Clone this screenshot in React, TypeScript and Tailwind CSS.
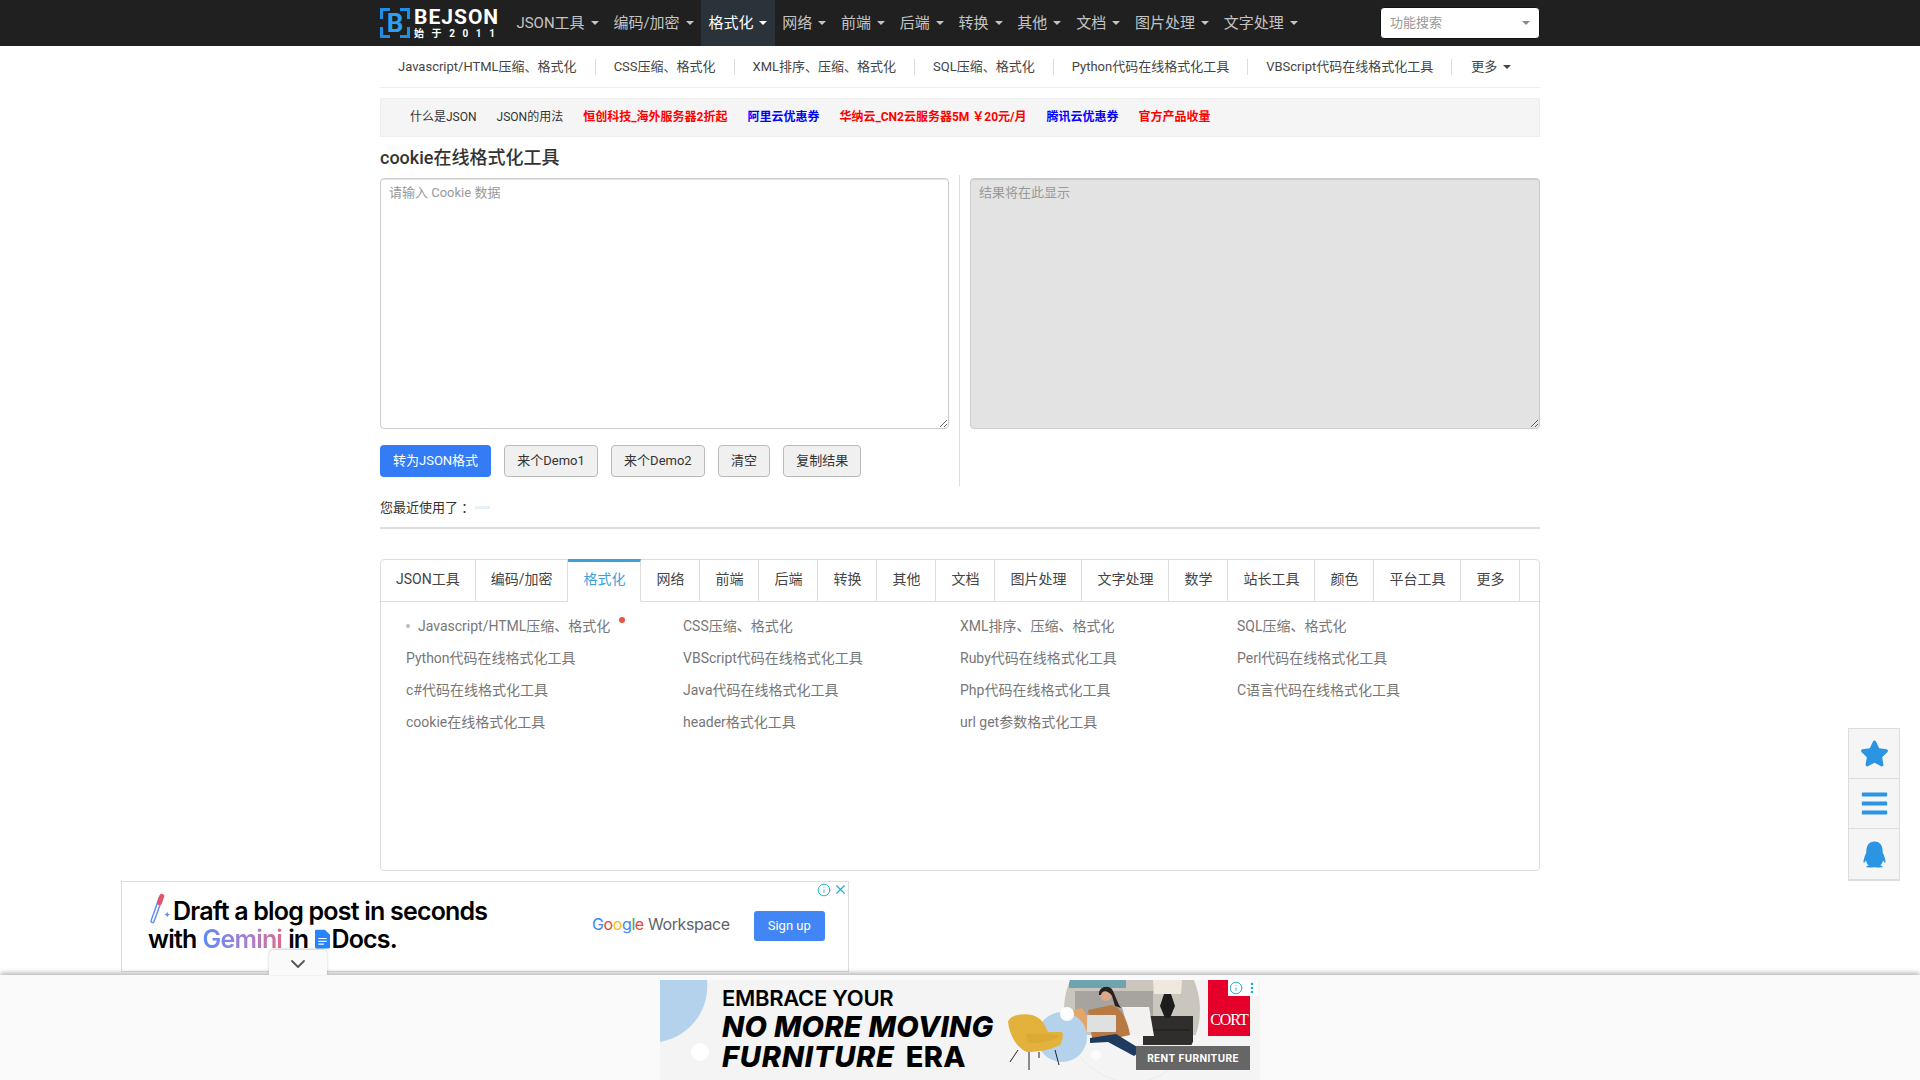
import { ChevronDown, Info, X } from 'lucide-react'
import { FaBars, FaStar } from 'react-icons/fa'
import { RiQqFill } from 'react-icons/ri'

const navItems = ['JSON工具', '编码/加密', '格式化', '网络', '前端', '后端', '转换', '其他', '文档', '图片处理', '文字处理']
const subItems = ['Javascript/HTML压缩、格式化', 'CSS压缩、格式化', 'XML排序、压缩、格式化', 'SQL压缩、格式化', 'Python代码在线格式化工具', 'VBScript代码在线格式化工具']
const tabs = ['JSON工具', '编码/加密', '格式化', '网络', '前端', '后端', '转换', '其他', '文档', '图片处理', '文字处理', '数学', '站长工具', '颜色', '平台工具', '更多']
const tools = [
  'Javascript/HTML压缩、格式化', 'CSS压缩、格式化', 'XML排序、压缩、格式化', 'SQL压缩、格式化',
  'Python代码在线格式化工具', 'VBScript代码在线格式化工具', 'Ruby代码在线格式化工具', 'Perl代码在线格式化工具',
  'c#代码在线格式化工具', 'Java代码在线格式化工具', 'Php代码在线格式化工具', 'C语言代码在线格式化工具',
  'cookie在线格式化工具', 'header格式化工具', 'url get参数格式化工具',
]
const links = [
  { text: '什么是JSON', cls: 'text-[#333]' },
  { text: 'JSON的用法', cls: 'text-[#333]' },
  { text: '恒创科技_海外服务器2折起', cls: 'text-[#ff0000] font-bold' },
  { text: '阿里云优惠券', cls: 'text-[#0000ff] font-bold' },
  { text: '华纳云_CN2云服务器5M ￥20元/月', cls: 'text-[#ff0000] font-bold' },
  { text: '腾讯云优惠券', cls: 'text-[#0000ff] font-bold' },
  { text: '官方产品收量', cls: 'text-[#ff0000] font-bold' },
]
const buttons = ['来个Demo1', '来个Demo2', '清空', '复制结果']

const Caret = () => <span className="ml-[6px] inline-block border-x-4 border-t-4 border-x-transparent border-t-current" />

const Logo = () => (
  <div className="flex items-center h-[46px]">
    <div className="relative w-[30px] h-[30px] flex items-center justify-center">
      <svg viewBox="0 0 30 30" className="absolute inset-0 w-full h-full" fill="none" stroke="#1c8fe8" strokeWidth="3">
        <path d="M10 1.5H1.5V11" />
        <path d="M20 1.5H28.5V11" />
        <path d="M1.5 19V28.5H10" />
        <path d="M28.5 19V28.5H20" />
      </svg>
      <span className="text-[#2aa0f5] text-[26px] font-bold leading-none">B</span>
    </div>
    <div className="ml-[4px] flex flex-col w-[87px]">
      <span className="text-white text-[21px] font-bold leading-[20px] tracking-[1px] whitespace-nowrap">BEJSON</span>
      <span className="text-white text-[10px] font-bold leading-[12px] mt-[1px] tracking-[7.6px] whitespace-nowrap">始于2011</span>
    </div>
  </div>
)

const Navbar = () => (
  <div className="h-[46px] bg-[#202020]">
    <div className="w-[1160px] mx-auto flex items-center">
      <Logo />
      <div className="ml-[8px] flex">
        {navItems.map((item) => (
          <div
            key={item}
            className={`h-[46px] px-[7.4px] flex items-center text-[15px] whitespace-nowrap ${item === '格式化' ? 'bg-[#2b333a] text-white' : 'text-[#c4c4c4]'}`}>
            {item}
            <Caret />
          </div>
        ))}
      </div>
      <div className="ml-auto w-[160px] h-[32px] bg-white rounded-sm border border-[#111] pl-[9px] pr-[9px] flex items-center justify-between text-[13px] text-[#999]">
        功能搜索
        <span className="border-x-4 border-t-4 border-x-transparent border-t-[#888]" />
      </div>
    </div>
  </div>
)

const SubNav = () => (
  <div className="h-[42px] border-b border-[#eee] flex items-start pt-[13px]">
    {subItems.map((item) => (
      <div key={item} className="h-[16px] px-[18px] border-r border-[#ddd] flex items-center text-[13px] text-[#444] whitespace-nowrap">
        {item}
      </div>
    ))}
    <div className="h-[16px] pl-[19px] flex items-center text-[13px] text-[#444]">
      更多
      <Caret />
    </div>
  </div>
)

const LinkBar = () => (
  <div className="mt-[10px] h-[39px] bg-[#f5f5f5] border border-[#eee] pl-[29px] pb-[2px] flex items-center gap-[20px] text-[12px] whitespace-nowrap">
    {links.map((l) => (
      <span key={l.text} className={l.cls}>
        {l.text}
      </span>
    ))}
  </div>
)

const Editor = () => (
  <div className="flex">
    <div className="w-[580px] pr-[11px] pt-[3px] h-[311px] border-r border-[#ddd]">
      <textarea
        placeholder="请输入 Cookie 数据"
        className="block w-[569px] h-[251px] border border-[#ccc] rounded-sm px-[8px] py-[4px] text-[13px] leading-[20px] text-[#333] placeholder:text-[#999] shadow-[inset_0_1px_1px_rgba(0,0,0,0.1)] outline-none"
      />
      <div className="mt-[16px] flex gap-[13px]">
        <button className="h-[32px] px-[13px] rounded-sm bg-[#337cf6] text-white text-[13px]">转为JSON格式</button>
        {buttons.map((b) => (
          <button key={b} className="h-[32px] px-[12.15px] rounded-sm bg-[#f0f0f0] border border-[#bbb] text-[#333] text-[13px]">
            {b}
          </button>
        ))}
      </div>
    </div>
    <div className="flex-1 pl-[10px] pt-[3px]">
      <textarea
        readOnly
        placeholder="结果将在此显示"
        className="block w-full h-[251px] border border-[#ccc] rounded-sm bg-[#e3e3e3] px-[8px] py-[4px] text-[13px] leading-[20px] placeholder:text-[#999] shadow-[inset_0_1px_1px_rgba(0,0,0,0.1)] outline-none"
      />
    </div>
  </div>
)

const ToolTabs = () => (
  <div className="mt-[30px] h-[312px] border border-[#ddd] rounded-sm">
    <div className="h-[42px] flex border-b border-[#ddd] text-[14px] text-[#444]">
      {tabs.map((t) => (
        <div
          key={t}
          className={`px-[15px] border-r border-[#ddd] flex items-center whitespace-nowrap ${t === '格式化' ? 'bg-white text-[#3ca0dc] border-t-[3px] border-t-[#3ca0dc] pb-[4px] -mt-px h-[43px] border-b border-b-white' : 'h-[41px] pb-[2px]'}`}>
          {t}
        </div>
      ))}
    </div>
    <div className="pl-[25px] pt-[8px] grid grid-cols-[repeat(4,277px)] auto-rows-[32px] text-[14px] text-[#777]">
      {tools.map((t, i) => (
        <div key={t} className="flex items-center whitespace-nowrap">
          {i === 0 && <span className="w-[4px] h-[4px] rounded-full bg-[#bbb] mr-[8px]" />}
          {t}
          {i === 0 && <span className="w-[6px] h-[6px] rounded-full bg-[#e8543f] ml-[9px] mb-[12px]" />}
        </div>
      ))}
    </div>
  </div>
)

const GeminiAd = () => (
  <div className="relative ml-[121px] mt-[10px] w-[728px] h-[91px] border border-[#ddd] bg-white flex items-start [font-family:Inter,sans-serif]">
    <div className="ml-[26px] mt-[15px] w-[400px]">
      <div className="flex items-center h-[28px] text-[25px] leading-[28px] font-semibold tracking-[-0.8px] text-black whitespace-nowrap">
        <svg viewBox="0 0 24 36" className="w-[22px] h-[34px] -mt-[3px] shrink-0" fill="none">
          <path d="M14 5 L5 30" stroke="#5f8df2" strokeWidth="5" strokeLinecap="round" />
          <path d="M14 5 L5 30" stroke="#fff" strokeWidth="1.8" strokeLinecap="round" />
          <path d="M15 3 L12.5 10" stroke="#e0566a" strokeWidth="5.5" strokeLinecap="round" />
          <path d="M21 20l1 2 2 1-2 1-1 2-1-2-2-1 2-1z" fill="#5f8df2" />
        </svg>
        <span className="ml-[3px]">Draft a blog post in seconds</span>
      </div>
      <div className="flex items-center h-[28px] text-[25px] leading-[28px] font-semibold tracking-[-0.8px] text-black whitespace-nowrap">
        with
        <span className="ml-[6px] bg-gradient-to-r from-[#5a8cf0] via-[#9a7fdc] to-[#d96b8c] bg-clip-text text-transparent">Gemini</span>
        <span className="ml-[6px]">in</span>
        <svg viewBox="0 0 16 20" className="w-[15px] h-[20px] ml-[7px] shrink-0">
          <path d="M1.5 0H10.5L16 5.5V18.5a1.5 1.5 0 0 1-1.5 1.5H1.5A1.5 1.5 0 0 1 0 18.5V1.5A1.5 1.5 0 0 1 1.5 0Z" fill="#2684fc" />
          <path d="M3.5 9.5H12.5M3.5 12.5H12.5M3.5 15.5H9.5" stroke="#fff" strokeWidth="1.2" />
        </svg>
        <span className="ml-px">Docs.</span>
      </div>
    </div>
    <div className="ml-[44px] mt-[32px] text-[16px] leading-[20px] tracking-[-0.4px] text-[#5f6368] whitespace-nowrap">
      <span className="text-[#4285f4]">G</span>
      <span className="text-[#ea4335]">o</span>
      <span className="text-[#fbbc05]">o</span>
      <span className="text-[#4285f4]">g</span>
      <span className="text-[#34a853]">l</span>
      <span className="text-[#ea4335]">e</span> Workspace
    </div>
    <button className="ml-[24px] mt-[29px] w-[71px] h-[30px] rounded-[3px] bg-[#4285f4] text-white text-[13px] [font-family:Roboto,sans-serif]">Sign up</button>
    <div className="absolute top-0 right-0 flex items-center gap-[2px] text-[#19aec7]">
      <Info size={14} strokeWidth={1.6} />
      <X size={15} strokeWidth={1.8} />
    </div>
  </div>
)

const FurniturePhoto = () => (
  <svg viewBox="0 0 600 100" className="absolute inset-0 w-[600px] h-[100px]">
    <path d="M0 0H47C50 28 32 56 0 62Z" fill="#b5d2ec" />
    <circle cx="40" cy="72" r="9" fill="#fff" />
    <clipPath id="photo">
      <ellipse cx="472" cy="30" rx="68" ry="72" />
    </clipPath>
    <g clipPath="url(#photo)">
      <rect x="395" y="0" width="150" height="100" fill="#cbc6bd" />
      <rect x="409" y="0" width="57" height="8" fill="#6fa3ad" />
      <rect x="415" y="11" width="78" height="28" fill="#a7a4a0" />
      <rect x="395" y="55" width="150" height="50" fill="#f4f4f4" />
      <rect x="483" y="36" width="50" height="29" fill="#302e2d" />
      <path d="M486 50H530" stroke="#1e1d1c" strokeWidth="1" />
      <path d="M493 0H522L521 14H494Z" fill="#efe8dc" />
      <path d="M504 14H511L515 26L510 38H505L500 26Z" fill="#1d1c1c" />
      <path d="M462 27L489 27L494 56L470 56Z" fill="#f2f1ef" />
      <path d="M397 34L422 28L435 50L405 52Z" fill="#e5a56a" />
      <path d="M428 30L452 25C462 28 468 42 470 55L456 58L432 58Z" fill="#b87a45" />
      <path d="M430 58L456 54L482 70L474 76L448 62L430 63Z" fill="#1f3a5f" />
      <rect x="427" y="35" width="29" height="17" rx="1" fill="#dfe0e0" />
      <circle cx="446" cy="15" r="6" fill="#d9a98a" />
      <path d="M439 15C438 6 450 4 453 11C455 15 458 24 461 28L455 26L452 16C448 10 442 10 441 15Z" fill="#2a2020" />
    </g>
    <circle cx="402" cy="57" r="25" fill="#b5d2ec" />
    <circle cx="407" cy="34" r="7" fill="#fff" />
    <circle cx="436" cy="75" r="5" fill="#fff" opacity="0.7" />
    <path d="M358 70L350 82M369 72V90M395 70L399 85M379 72V78" stroke="#222" strokeWidth="1" />
    <path d="M348 42C350 35 362 33 372 35C382 38 385 45 388 52L402 52C404 56 402 62 400 65C390 70 378 72 367 72C358 68 350 58 348 42Z" fill="#e3b23c" />
    <path d="M366 54C376 53 392 53 400 56C392 61 380 64 368 63Z" fill="#dba934" />
    <rect x="568" y="0" width="30" height="16" fill="#fff" />
    <circle cx="592" cy="4" r="1.3" fill="#19aec7" />
    <circle cx="592" cy="8" r="1.3" fill="#19aec7" />
    <circle cx="592" cy="12" r="1.3" fill="#19aec7" />
  </svg>
)

const BottomBar = () => (
  <div className="fixed left-0 right-0 bottom-0 h-[105px] bg-[#fafafa] shadow-[0_-2px_5px_rgba(0,0,0,0.3)] flex justify-center pt-[5px]">
    <div className="absolute left-[269px] top-[-25px] w-[58px] h-[25px] pt-[2px] bg-[#fafafa] rounded-t-[5px] shadow-[0_-1px_3px_rgba(0,0,0,0.2)] flex items-center justify-center text-[#555]">
      <ChevronDown size={24} strokeWidth={1.8} />
    </div>
    <div className="relative w-[600px] h-[100px] bg-[#f4f4f4] overflow-hidden">
      <div className="absolute top-0 left-[548px] w-[42px] h-[56px] bg-[#e4002b] flex items-end justify-center pb-[4px] text-white text-[16px] tracking-[-1px] [font-family:'Liberation_Serif',serif]">
        CORT
      </div>
      <FurniturePhoto />
      <div className="relative ml-[62px] pt-[5px] [font-family:Inter,sans-serif] text-black whitespace-nowrap">
        <div className="text-[22px] leading-[27px] font-semibold tracking-[-0.3px]">EMBRACE YOUR</div>
        <div className="text-[29px] leading-[30px] font-extrabold italic tracking-[0.3px]">NO MORE MOVING</div>
        <div className="text-[29px] leading-[30px] font-extrabold">
          <span className="italic tracking-[0.8px]">FURNITURE</span>
          <span className="ml-[11px] tracking-[0.3px]">ERA</span>
        </div>
      </div>
      <div className="absolute left-[568px] top-0 w-[15px] h-[16px] flex items-center justify-center text-[#19aec7]">
        <Info size={14} strokeWidth={1.6} />
      </div>
      <div className="absolute left-[476px] top-[66px] w-[114px] h-[24px] bg-[#666] text-white text-[10px] font-bold tracking-[0.4px] flex items-center justify-center [font-family:Inter,sans-serif]">
        RENT FURNITURE
      </div>
    </div>
  </div>
)

const SideTools = () => (
  <div className="fixed right-[20px] top-[728px] w-[52px] bg-[#f5f5f5] border border-[#ddd] border-b-[2px] divide-y divide-[#ddd] text-[#2b95e3]">
    <div className="h-[50px] flex items-center justify-center">
      <FaStar size={29} />
    </div>
    <div className="h-[50px] flex items-center justify-center">
      <FaBars size={29} />
    </div>
    <div className="h-[50px] flex items-center justify-center">
      <RiQqFill size={31} />
    </div>
  </div>
)

export default function App() {
  return (
    <div className="min-h-[1080px] bg-white overflow-hidden [font-family:Roboto,'Noto_Sans_CJK_SC',sans-serif]">
      <Navbar />
      <div className="w-[1160px] mx-auto">
        <SubNav />
        <LinkBar />
        <h1 className="h-[38px] pt-[2px] flex items-center text-[18px] font-medium text-[#333]">cookie在线格式化工具</h1>
        <Editor />
        <div className="h-[41px] pt-[2px] flex items-center text-[13px] text-[#333]">
          您最近使用了<span className="[font-family:'Noto_Sans_CJK_TC',sans-serif]">：</span>
          <span className="ml-[4px] w-[15px] h-[3px] bg-[#e4f1f8]" />
        </div>
        <div className="h-[2px] bg-[#ddd]" />
        <ToolTabs />
      </div>
      <GeminiAd />
      <BottomBar />
      <SideTools />
    </div>
  )
}
